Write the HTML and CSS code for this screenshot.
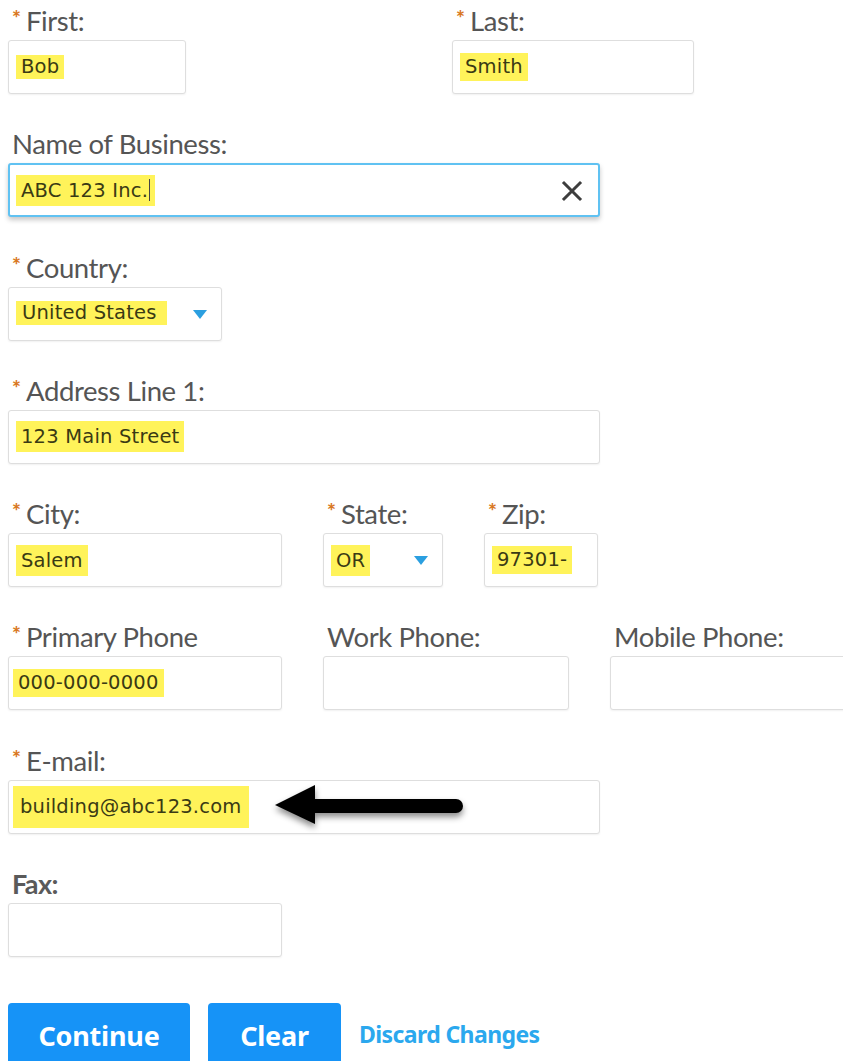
FILE: index.html
```html
<!DOCTYPE html>
<html lang="en">
<head>
<meta charset="utf-8">
<title>Contact Information</title>
<link rel="stylesheet" href="styles.css">
</head>
<body>
<form class="form">
  <div class="row row-name">
    <div class="field w-first">
      <div class="label"><span class="req">*</span>First:</div>
      <div class="input"><span class="hl hl-sm">Bob</span></div>
    </div>
    <div class="field w-last">
      <div class="label"><span class="req">*</span>Last:</div>
      <div class="input"><span class="hl hl-md">Smith</span></div>
    </div>
  </div>

  <div class="field w-wide">
    <div class="label">Name of Business:</div>
    <div class="input input-focus">
      <span class="hl hl-lg">ABC 123 Inc.<span class="caret"></span></span>
      <svg class="clear-x" width="22" height="22" viewBox="0 0 22 22" aria-hidden="true">
        <path d="M3 3 L19 19 M19 3 L3 19" stroke="#3d3d3d" stroke-width="3" stroke-linecap="square"/>
      </svg>
    </div>
  </div>

  <div class="field w-country">
    <div class="label"><span class="req">*</span>Country:</div>
    <div class="input select">
      <span class="hl hl-country">United States</span>
      <span class="caret-down"></span>
    </div>
  </div>

  <div class="field w-wide">
    <div class="label"><span class="req">*</span>Address Line 1:</div>
    <div class="input"><span class="hl hl-lg">123 Main Street</span></div>
  </div>

  <div class="row row-city">
    <div class="field w-city">
      <div class="label"><span class="req">*</span>City:</div>
      <div class="input"><span class="hl hl-lg">Salem</span></div>
    </div>
    <div class="field w-state">
      <div class="label"><span class="req">*</span>State:</div>
      <div class="input select">
        <span class="hl hl-lg">OR</span>
        <span class="caret-down"></span>
      </div>
    </div>
    <div class="field w-zip">
      <div class="label"><span class="req">*</span>Zip:</div>
      <div class="input"><span class="hl hl-md">97301-</span></div>
    </div>
  </div>

  <div class="row row-phone">
    <div class="field w-city">
      <div class="label"><span class="req">*</span>Primary Phone</div>
      <div class="input input-tight"><span class="hl hl-md">000-000-0000</span></div>
    </div>
    <div class="field w-phone">
      <div class="label">Work Phone:</div>
      <div class="input"></div>
    </div>
    <div class="field w-phone">
      <div class="label">Mobile Phone:</div>
      <div class="input"></div>
    </div>
  </div>

  <div class="field w-wide">
    <div class="label"><span class="req">*</span>E-mail:</div>
    <div class="input input-tight">
      <span class="hl hl-xl">building@abc123.com</span>
      <svg class="pointer" width="200" height="48" viewBox="0 0 200 48" aria-hidden="true">
        <defs>
          <filter id="soft" x="-10%" y="-30%" width="120%" height="180%">
            <feDropShadow dx="0" dy="4" stdDeviation="3" flood-color="#000" flood-opacity="0.45"/>
          </filter>
        </defs>
        <g filter="url(#soft)">
          <path d="M2 22 L42 2 L42 41 Z" fill="#000"/>
          <path d="M40 16 H183 a7 7 0 0 1 0 14 H40 Z" fill="#000"/>
        </g>
      </svg>
    </div>
  </div>

  <div class="field w-city">
    <div class="label label-plain">Fax:</div>
    <div class="input"></div>
  </div>

  <div class="actions">
    <button type="button" class="btn btn-continue">Continue</button>
    <button type="button" class="btn btn-clear">Clear</button>
    <a class="discard" href="#">Discard Changes</a>
  </div>
</form>
</body>
</html>
```

FILE: styles.css
```css
html, body {
  margin: 0;
  padding: 0;
  background: #fff;
}

body {
  width: 843px;
  height: 1061px;
  overflow: hidden;
}

.form {
  padding: 8px 0 0 8px;
  font-family: Lato, "Open Sans", sans-serif;
}

.row {
  display: flex;
  align-items: flex-start;
}

.row-name { gap: 266px; }
.row-city { gap: 41px; }
.row-phone { gap: 41px; }

.field {
  margin-bottom: 37.3px;
  flex: none;
}

.w-first { width: 178px; }
.w-last { width: 242px; }
.w-wide { width: 592px; }
.w-country { width: 214px; }
.w-city { width: 274px; }
.w-state { width: 120px; }
.w-zip { width: 114px; }
.w-phone { width: 246px; }

.label {
  height: 26px;
  line-height: 26px;
  margin-bottom: 6px;
  padding-left: 4px;
  font-size: 27.5px;
  letter-spacing: -0.4px;
  color: #555;
  white-space: nowrap;
}

.label-plain {
  font-size: 27px;
  font-weight: 700;
  letter-spacing: -0.6px;
  color: #5a5a5a;
}

.req {
  display: inline-block;
  position: relative;
  top: -5px;
  width: 14px;
  font-size: 21px;
  font-weight: 900;
  line-height: 1;
  color: #d9781f;
}

.input {
  position: relative;
  box-sizing: border-box;
  height: 54px;
  display: flex;
  align-items: center;
  padding-left: 7px;
  border: 1px solid #dedede;
  border-radius: 3px;
  background: #fff;
  box-shadow: 0 1px 2px rgba(0, 0, 0, 0.06);
  font-family: "DejaVu Sans", Verdana, sans-serif;
  font-size: 19.5px;
  letter-spacing: 0.2px;
  color: #333;
}

.input-tight { padding-left: 4px; }

.input-focus {
  border: 2px solid #60c2f2;
  padding-left: 6px;
  box-shadow: 0 3px 5px rgba(0, 0, 0, 0.22);
}

.hl {
  background: #fff35a;
  color: #3a3a14;
  padding: 0 5px;
  white-space: nowrap;
  line-height: 23px;
}

.hl-sm { padding: 0 5px; line-height: 24px; }
.hl-md { padding: 0 5px; line-height: 28px; }
.hl-lg { padding: 0 5px; line-height: 31px; }
.hl-xl { padding: 0 7px; line-height: 42px; }

.hl-country {
  line-height: 24px;
  padding: 0 10px 0 6px;
  margin-top: -2px;
}

.caret {
  display: inline-block;
  width: 1px;
  height: 22px;
  margin-left: 1px;
  background: #444;
  vertical-align: -4px;
}

.clear-x {
  position: absolute;
  right: 15px;
  top: 15px;
}

.select .caret-down {
  position: absolute;
  right: 14px;
  top: 22px;
  width: 0;
  height: 0;
  border-left: 7px solid transparent;
  border-right: 7px solid transparent;
  border-top: 9px solid #2b9fe0;
}

.pointer {
  position: absolute;
  left: 264px;
  top: 2px;
  overflow: visible;
}

.actions {
  display: flex;
  align-items: flex-start;
  margin-top: 46px;
}

.btn {
  height: 80px;
  padding: 0 0 16px;
  border: none;
  border-radius: 4px;
  background: #1693f7;
  color: #fff;
  font-family: "Noto Sans", "Open Sans", sans-serif;
  font-weight: 700;
  font-size: 27px;
  letter-spacing: -0.2px;
}

.btn-continue { width: 182px; }
.btn-clear { width: 133px; margin-left: 18px; }

.discard {
  margin: 15px 0 0 18px;
  font-family: "Noto Sans", "Open Sans", sans-serif;
  font-weight: 700;
  font-size: 23px;
  letter-spacing: -0.6px;
  color: #2ba8ee;
  text-decoration: none;
}
```
